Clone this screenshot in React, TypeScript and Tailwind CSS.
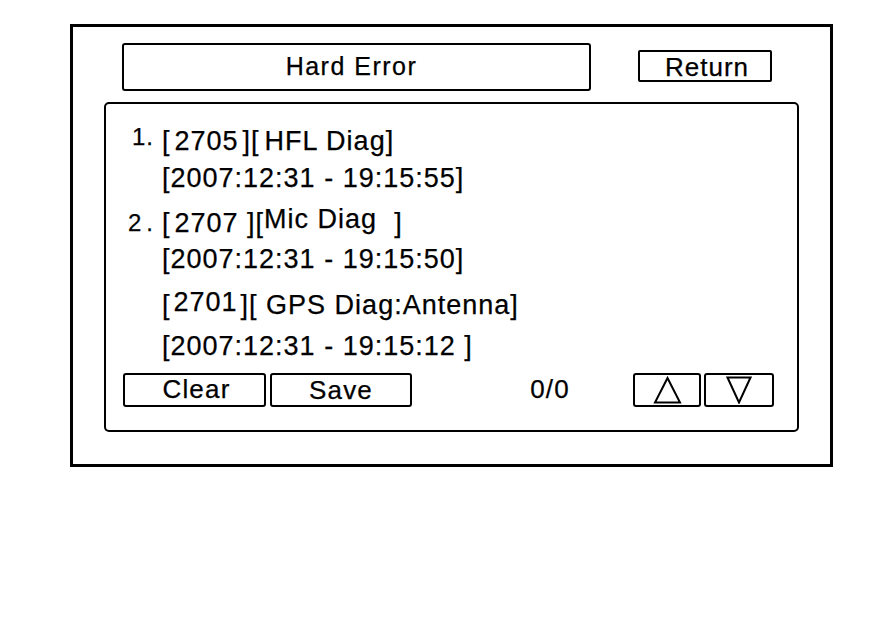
import React from 'react';

const font = "font-['Liberation_Sans',Arial,sans-serif]";

function Btn({ children, className }: { children: React.ReactNode; className?: string }) {
  return (
    <div
      className={`flex h-[34px] items-center justify-center rounded-[3px] border-2 border-black ${className ?? ''}`}
    >
      {children}
    </div>
  );
}

function UpArrow() {
  return (
    <svg width="29" height="28" viewBox="0 0 29 28">
      <polygon points="14.5,2 27,26.5 2,26.5" fill="none" stroke="black" strokeWidth="2" />
    </svg>
  );
}

function DownArrow() {
  return (
    <svg width="26" height="28" viewBox="0 0 26 28">
      <polygon points="1.5,1.5 24.5,1.5 13,26.5" fill="none" stroke="black" strokeWidth="2" />
    </svg>
  );
}

export default function App() {
  return (
    <div
      className={`h-[630px] w-[880px] bg-white pl-[70px] pt-[24px] text-black [-webkit-text-stroke:0.25px_black] ${font}`}
    >
      <div className="h-[443px] w-[763px] border-[3px] border-black">
        {/* header */}
        <div className="flex items-start pl-[49px] pt-[16px]">
          <div className="flex h-[48px] w-[469px] items-center justify-center rounded-[3px] border-2 border-black pr-[10px] text-[25px] tracking-[1.5px]">
            Hard Error
          </div>
          <div className="ml-[47px] mt-[7px] flex h-[32px] w-[134px] items-center justify-center rounded-[2px] border-2 border-black pl-[4px] pt-[2px] text-[26px] tracking-[1px]">
            Return
          </div>
        </div>

        {/* error list panel */}
        <div className="ml-[31px] mt-[11px] h-[330px] w-[695px] rounded-[5px] border-2 border-black">
          <div className="pt-[21px] text-[27px] leading-[32px] tracking-[1px] whitespace-pre">
            <div className="flex h-[32px] items-start">
              <div className="w-[56px] pr-[8px] text-right text-[24px] leading-[24px]">1.</div>
              <div>
                [<span className="px-[4px]">2705</span>][<span className="pl-[5px]">HFL Diag</span>]
              </div>
            </div>
            <div className="mt-[5px] h-[32px] pl-[56px]">[2007:12:31 - 19:15:55]</div>

            <div className="mt-[9px] flex h-[32px] items-start">
              <div className="w-[56px] pr-[9px] text-right text-[24px] leading-[40px] tracking-normal">
                2<span className="ml-[5px]">.</span>
              </div>
              <div>
                [<span className="pl-[4px]">2707</span> ][<span className="align-[4px]">Mic Diag</span>  ]
              </div>
            </div>
            <div className="mt-[8px] h-[32px] pl-[56px]">[2007:12:31 - 19:15:50]</div>

            <div className="mt-[11px] h-[32px] pl-[56px]">
              [<span className="px-[3px] align-[3px]">2701</span>][ GPS Diag:Antenna]
            </div>
            <div className="mt-[12px] h-[32px] pl-[56px]">[2007:12:31 - 19:15:12 ]</div>
          </div>

          {/* controls */}
          <div className="mt-[8px] flex items-center pl-[17px] text-[26px] tracking-[1.2px]">
            <Btn className="w-[143px] pl-[4px]">Clear</Btn>
            <Btn className="ml-[4px] w-[142px] pt-[2px]">Save</Btn>
            <div className="ml-[118px] w-[40px] text-center">0/0</div>
            <Btn className="ml-[63px] w-[68px]">
              <UpArrow />
            </Btn>
            <Btn className="ml-[3px] w-[70px]">
              <DownArrow />
            </Btn>
          </div>
        </div>
      </div>
    </div>
  );
}
